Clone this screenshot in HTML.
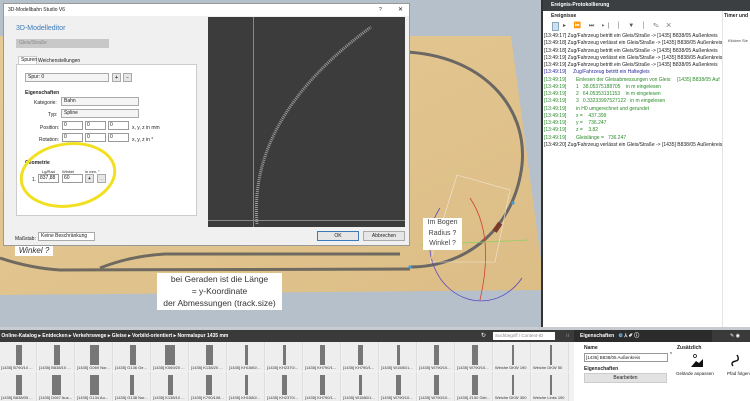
<!DOCTYPE html><html><head><meta charset="utf-8"><style>
*{margin:0;padding:0;box-sizing:border-box}
body{width:750px;height:401px;overflow:hidden;position:relative;background:#b5c0cb;font-family:"Liberation Sans",sans-serif;font-size:5px;color:#222}
.a{position:absolute}
.in{position:absolute;background:#fff;border:1px solid #9a9a9a;font-size:5px;padding-left:1px;line-height:7px}
.sel{position:absolute;background:#f4f4f4;border:1px solid #aaa;font-size:5px;padding-left:2px;line-height:7px}
.btn{position:absolute;background:#e6e6e6;border:1px solid #aaa;font-size:5px;text-align:center;line-height:8px}
.log div{height:7.25px;line-height:7.25px;white-space:nowrap}
.g{color:#2a8a2a}.b{color:#2a2aa0}
.tile{position:absolute;width:37px;height:29px;background:#eee;border-right:1px solid #ddd}
.tile i{position:absolute;left:16px;top:3px;width:6px;height:20px;background:#777}
.tile span{position:absolute;left:1px;bottom:1px;font-size:4px;color:#333;white-space:nowrap;overflow:hidden;width:35px}
</style></head><body>
<svg class="a" style="left:0;top:0" width="750" height="401">
<defs><linearGradient id="w" x1="0" y1="0" x2="1" y2="1"><stop offset="0" stop-color="#e6c994"/><stop offset="1" stop-color="#dcbd86"/></linearGradient></defs>
<polygon points="0,36 511,36 545,290 0,295" fill="url(#w)"/>
<path d="M405,52 C480,55 528,105 522,165 C515,225 470,267 410,267" fill="none" stroke="#6a6764" stroke-width="3"/>
<path d="M0,258 Q30,268 60,270 L410,269" fill="none" stroke="#706a60" stroke-width="3"/>
<path d="M100,268 Q130,256 165,254 L400,254" fill="none" stroke="#6f6a60" stroke-width="3"/>
<path d="M440,208 A40,45 0 1 0 522,278" fill="none" stroke="#5a48c0" stroke-width="0.8"/>
<path d="M470,198 Q495,235 480,300" fill="none" stroke="#d04030" stroke-width="0.8"/>
<path d="M420,245 L528,240" stroke="#8ad060" stroke-width="0.7"/>
<path d="M457,175 L510,190 L495,262 L430,262 Z" fill="none" stroke="#f0e8d8" stroke-width="0.6"/>
<circle cx="513" cy="203" r="1.6" fill="#3aa0e0"/><circle cx="410" cy="267" r="1.6" fill="#3aa0e0"/>
<rect x="495" y="222" width="5" height="10" fill="#7a3a2a" transform="rotate(35 497 227)"/>
</svg>
<!-- dialog -->
<div class="a" style="left:3px;top:3px;width:407px;height:243px;background:#f0f0f0;border:1px solid #999">
<div class="a" style="left:0;top:0;width:405px;height:12px;background:#fff;font-size:5px;line-height:12px;padding-left:4px">3D-Modellbahn Studio V6<span class="a" style="left:375px;top:0">?</span><span class="a" style="left:394px;top:0;font-size:6px">✕</span></div>
<div class="a" style="left:12px;top:21px;font-size:7px;color:#3a7ab8">3D-Modelleditor</div>
<div class="a" style="left:12px;top:35px;width:93px;height:9px;background:#c8c8c8;color:#888;padding-left:3px;line-height:9px">Gleis/Straße</div>
<div class="a" style="left:14px;top:52px;width:19px;height:8px;background:#fff;border:1px solid #ccc;border-bottom:none;line-height:7px;padding-left:2px">Spuren</div>
<div class="a" style="left:34px;top:54px;line-height:7px">Weichenstellungen</div>
<div class="a" style="left:12px;top:60px;width:181px;height:152px;background:#fff;border:1px solid #ccc"></div>
<div class="sel" style="left:21px;top:69px;width:84px;height:9px">Spur: 0</div>
<div class="btn" style="left:108px;top:69px;width:9px;height:9px;font-weight:bold">+</div>
<div class="btn" style="left:119px;top:69px;width:9px;height:9px">−</div>
<div class="a" style="left:21px;top:86px;font-weight:bold">Eigenschaften</div>
<div class="a" style="left:30px;top:96px">Kategorie:</div><div class="sel" style="left:57px;top:93px;width:78px;height:9px">Bahn</div>
<div class="a" style="left:44px;top:108px">Typ:</div><div class="sel" style="left:57px;top:105px;width:78px;height:9px">Spline</div>
<div class="a" style="left:36px;top:121px">Position:</div>
<div class="in" style="left:58px;top:117px;width:21px;height:9px">0</div><div class="in" style="left:81px;top:117px;width:21px;height:9px">0</div><div class="in" style="left:104px;top:117px;width:21px;height:9px">0</div><div class="a" style="left:128px;top:121px">x, y, z in mm</div>
<div class="a" style="left:35px;top:133px">Rotation:</div>
<div class="in" style="left:58px;top:129px;width:21px;height:9px">0</div><div class="in" style="left:81px;top:129px;width:21px;height:9px">0</div><div class="in" style="left:104px;top:129px;width:21px;height:9px">0</div><div class="a" style="left:128px;top:133px">x, y, z in °</div>
<div class="a" style="left:21px;top:156px;font-weight:bold">Geometrie</div>
<div class="a" style="left:38px;top:165px;font-size:4px">Lg/Rad</div><div class="a" style="left:58px;top:165px;font-size:4px">Winkel</div><div class="a" style="left:81px;top:165px;font-size:4px">in mm, °</div>
<div class="a" style="left:28px;top:173px">1.</div>
<div class="in" style="left:34px;top:170px;width:21px;height:9px">837,88</div><div class="in" style="left:58px;top:170px;width:21px;height:9px">60</div>
<div class="btn" style="left:81px;top:170px;width:9px;height:9px;font-weight:bold">+</div><div class="btn" style="left:93px;top:170px;width:9px;height:9px;color:#999">…</div>
<div class="a" style="left:204px;top:13px;width:197px;height:210px;background:#3c3c3c"></div>
<div class="a" style="left:249px;top:13px;width:1px;height:210px;background:#888"></div>
<div class="a" style="left:204px;top:216px;width:197px;height:1px;background:#888"></div>
<svg class="a" style="left:204px;top:13px" width="197" height="210"><path d="M49,207 Q40,100 163,10" fill="none" stroke="#999" stroke-width="3" stroke-dasharray="1 1"/></svg>
<div class="a" style="left:11px;top:232px">Maßstab:</div>
<div class="sel" style="left:34px;top:228px;width:57px;height:9px;background:#fff">Keine Beschränkung</div>
<div class="btn" style="left:313px;top:227px;width:42px;height:10px;border-color:#3a7ab8">OK</div>
<div class="btn" style="left:359px;top:227px;width:42px;height:10px">Abbrechen</div>
</div>
<svg class="a" style="left:0;top:0" width="200" height="240"><ellipse cx="68" cy="175" rx="47" ry="31" fill="none" stroke="#f2e020" stroke-width="3" transform="rotate(-8 68 175)"/></svg>
<!-- labels -->
<div class="a" style="left:15px;top:246px;width:38px;height:10px;background:#fff;font-size:8px;font-style:italic;line-height:10px;text-align:center;color:#333">Winkel ?</div>
<div class="a" style="left:157px;top:273px;width:125px;height:37px;background:#fff;font-size:8.5px;line-height:12px;text-align:center;color:#333">bei Geraden ist die Länge<br>= y-Koordinate<br>der Abmessungen (track.size)</div>
<div class="a" style="left:423px;top:218px;width:39px;height:32px;background:#fff;font-size:7px;line-height:10.5px;text-align:center;color:#444">Im Bogen<br>Radius ?<br>Winkel ?</div>
<!-- event panel -->
<div class="a" style="left:541px;top:0;width:209px;height:329px;background:#fff;border-left:2px solid #333;border-bottom:2px solid #333"></div>
<div class="a" style="left:543px;top:0;width:207px;height:11px;background:#3c3f41;color:#fff;font-weight:bold;font-size:5px;line-height:11px;padding-left:8px">Ereignis-Protokollierung</div>
<div class="a" style="left:551px;top:13px;font-weight:bold">Ereignisse</div>
<div class="a" style="left:724px;top:13px;font-weight:bold">Timer und</div>
<div class="a" style="left:722px;top:11px;width:1px;height:316px;background:#e4e4e4"></div>
<div class="a" style="left:728px;top:38px;font-size:4px;color:#444">Klicken Sie</div>
<div class="a" style="left:552px;top:22px;width:7px;height:9px;background:#cfe0f5;border:1px solid #8ab"></div>
<div class="a" style="left:563px;top:22px;font-size:6px;color:#555;letter-spacing:3px">▸ ⏩ ⏭ ▸| │ ▼ │ ✎ ✕</div>
<div class="a log" style="left:544px;top:33px;font-size:5px;color:#222">
<div>[13:49:17] Zug/Fahrzeug betritt ein Gleis/Straße -&gt; [1435] B838/05 Außenkreis</div>
<div>[13:49:18] Zug/Fahrzeug verlässt ein Gleis/Straße -&gt; [1435] B838/05 Außenkreis</div>
<div>[13:49:18] Zug/Fahrzeug betritt ein Gleis/Straße -&gt; [1435] B838/05 Außenkreis</div>
<div>[13:49:19] Zug/Fahrzeug verlässt ein Gleis/Straße -&gt; [1435] B838/05 Außenkreis</div>
<div>[13:49:19] Zug/Fahrzeug betritt ein Gleis/Straße -&gt; [1435] B838/05 Außenkreis</div>
<div class="b">[13:49:19]&nbsp;&nbsp;&nbsp;&nbsp; Zug/Fahrzeug betritt ein Haltegleis</div>
<div class="g">[13:49:19]&nbsp;&nbsp;&nbsp;&nbsp;&nbsp;&nbsp; Einlesen der Gleisabmessungen von Gleis:&nbsp;&nbsp;&nbsp; [1435] B838/05 Auf</div>
<div class="g">[13:49:19]&nbsp;&nbsp;&nbsp;&nbsp;&nbsp;&nbsp; 1&nbsp;&nbsp; 38.05375188705&nbsp;&nbsp;&nbsp; in m eingelesen</div>
<div class="g">[13:49:19]&nbsp;&nbsp;&nbsp;&nbsp;&nbsp;&nbsp; 2&nbsp;&nbsp; 64.05353131153&nbsp;&nbsp;&nbsp; in m eingelesen</div>
<div class="g">[13:49:19]&nbsp;&nbsp;&nbsp;&nbsp;&nbsp;&nbsp; 3&nbsp;&nbsp; 0.33233997527122&nbsp;&nbsp; in m eingelesen</div>
<div class="g">[13:49:19]&nbsp;&nbsp;&nbsp;&nbsp;&nbsp;&nbsp; in H0 umgerechnet und gerundet</div>
<div class="g">[13:49:19]&nbsp;&nbsp;&nbsp;&nbsp;&nbsp;&nbsp; x =&nbsp;&nbsp;&nbsp; 437.399</div>
<div class="g">[13:49:19]&nbsp;&nbsp;&nbsp;&nbsp;&nbsp;&nbsp; y =&nbsp;&nbsp;&nbsp; 736.247</div>
<div class="g">[13:49:19]&nbsp;&nbsp;&nbsp;&nbsp;&nbsp;&nbsp; z =&nbsp;&nbsp;&nbsp; 3.82</div>
<div class="g">[13:49:19]&nbsp;&nbsp;&nbsp;&nbsp;&nbsp;&nbsp; Gleislänge =&nbsp;&nbsp; 736.247</div>
<div>[13:49:20] Zug/Fahrzeug verlässt ein Gleis/Straße -&gt; [1435] B838/05 Außenkreis</div>
</div>
<div class="a" style="left:0;top:327px;width:750px;height:3px;background:#c8ccd0"></div>
<!-- bottom -->
<div class="a" style="left:0;top:330px;width:750px;height:12px;background:#3a3a3a;color:#fff;font-size:5px;line-height:12px;font-weight:bold;white-space:nowrap">&nbsp;Online-Katalog ▸ Entdecken ▸ Verkehrswege ▸ Gleise ▸ Vorbild-orientiert ▸ Normalspur 1435 mm</div>
<div class="a" style="left:481px;top:332px;color:#fff;font-size:6px;line-height:8px">↻</div>
<div class="a" style="left:493px;top:332px;width:62px;height:8px;background:#fff;color:#888;font-size:4.5px;line-height:8px;padding-left:2px">Suchbegriff / Content-ID</div>
<div class="a" style="left:566px;top:333px;color:#ccc;font-size:5px">⁝⁝</div>
<div class="a" style="left:574px;top:330px;width:138px;height:12px;background:#2c2c2c;color:#fff;font-weight:bold;font-size:5px;line-height:12px;padding-left:6px">Eigenschaften&nbsp;&nbsp; <span style="color:#7cf">⚙</span> ⅄ ✐ ⓘ</div>
<div class="a" style="left:730px;top:330px;color:#fff;font-size:5px;line-height:12px">✎ ◉</div>
<div class="a" style="left:0;top:342px;width:574px;height:59px;background:#f2f2f2"></div>
<div class="a" style="left:574px;top:342px;width:176px;height:59px;background:#fff"></div>
<div class="a" style="left:584px;top:345px;font-weight:bold">Name</div>
<div class="a" style="left:584px;top:353px;width:84px;height:9px;border:1px solid #999;font-size:4.5px;line-height:7px;padding-left:1px">[1435] B838/05 Außenkreis</div>
<div class="a" style="left:670px;top:352px">*</div>
<div class="a" style="left:584px;top:366px;font-weight:bold">Eigenschaften</div>
<div class="a" style="left:584px;top:373px;width:83px;height:10px;background:#e2e2e2;border:1px solid #ccc;text-align:center;line-height:8px">Bearbeiten</div>
<div class="a" style="left:677px;top:345px;font-weight:bold">Zusätzlich</div>
<svg class="a" style="left:690px;top:353px" width="60" height="16"><circle cx="5" cy="3" r="1.5" fill="none" stroke="#000" stroke-width="0.7"/><path d="M1,14 L6,8 L9,10 L13,6 L13,14Z" fill="#111"/><path d="M43,13 Q40,9 46,8 Q50,7 47,2" fill="none" stroke="#111" stroke-width="1.4"/></svg>
<div class="a" style="left:676px;top:371px;font-size:4.5px">Gelände anpassen</div>
<div class="a" style="left:727px;top:371px;font-size:4.5px">Pfad folgen</div>
<div class="a" style="left:0;top:342px">
<div class="tile" style="left:0"><i></i><span>[1435] B790/10 ...</span></div>
<div class="tile" style="left:38px"><i></i><span>[1435] B838/10 ...</span></div>
<div class="tile" style="left:76px"><i style="width:9px;left:14px"></i><span>[1435] G069 Nor...</span></div>
<div class="tile" style="left:114px"><i></i><span>[1435] G136 Ge...</span></div>
<div class="tile" style="left:152px"><i style="width:10px;left:13px"></i><span>[1435] K069/20 ...</span></div>
<div class="tile" style="left:190px"><i style="width:7px"></i><span>[1435] K138/20 ...</span></div>
<div class="tile" style="left:228px"><i style="width:3px;left:17px"></i><span>[1435] KH1580/...</span></div>
<div class="tile" style="left:266px"><i style="width:3px;left:17px"></i><span>[1435] KH2370/...</span></div>
<div class="tile" style="left:304px"><i style="width:5px"></i><span>[1435] KH790/1...</span></div>
<div class="tile" style="left:342px"><i style="width:5px"></i><span>[1435] KH790/1...</span></div>
<div class="tile" style="left:380px"><i style="width:3px;left:17px"></i><span>[1435] W1580/1...</span></div>
<div class="tile" style="left:418px"><i style="width:5px"></i><span>[1435] W790/10...</span></div>
<div class="tile" style="left:456px"><i style="width:6px"></i><span>[1435] W790/10...</span></div>
<div class="tile" style="left:494px"><i style="width:2px;left:18px"></i><span>Weiche DKW 190</span></div>
<div class="tile" style="left:532px"><i style="width:2px;left:18px"></i><span>Weiche DKW 50</span></div>
</div>
<div class="a" style="left:0;top:372px">
<div class="tile" style="left:0"><i></i><span>[1435] B838/05 ...</span></div>
<div class="tile" style="left:38px"><i style="width:9px;left:14px"></i><span>[1435] D067 Aus...</span></div>
<div class="tile" style="left:76px"><i style="width:9px;left:14px"></i><span>[1435] G134 Au...</span></div>
<div class="tile" style="left:114px"><i style="width:4px"></i><span>[1435] G138 Nor...</span></div>
<div class="tile" style="left:152px"><i style="width:5px"></i><span>[1435] K138/10 ...</span></div>
<div class="tile" style="left:190px"><i style="width:6px"></i><span>[1435] K790/108...</span></div>
<div class="tile" style="left:228px"><i style="width:3px;left:17px"></i><span>[1435] KH1580/...</span></div>
<div class="tile" style="left:266px"><i style="width:5px"></i><span>[1435] KH2370/...</span></div>
<div class="tile" style="left:304px"><i style="width:5px"></i><span>[1435] KH790/1...</span></div>
<div class="tile" style="left:342px"><i style="width:3px;left:17px"></i><span>[1435] W1580/1...</span></div>
<div class="tile" style="left:380px"><i style="width:5px"></i><span>[1435] W790/10...</span></div>
<div class="tile" style="left:418px"><i style="width:5px"></i><span>[1435] W790/10...</span></div>
<div class="tile" style="left:456px"><i style="width:6px"></i><span>[1435] Z150 Glei...</span></div>
<div class="tile" style="left:494px"><i style="width:2px;left:18px"></i><span>Weiche DKW 300</span></div>
<div class="tile" style="left:532px"><i style="width:2px;left:18px"></i><span>Weiche Links 190</span></div>
</div>
</body></html>
